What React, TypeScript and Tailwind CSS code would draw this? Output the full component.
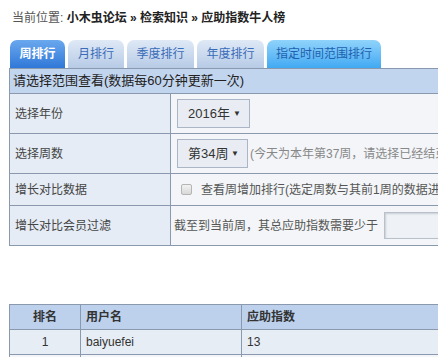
import React from "react";

const font = { fontFamily: '"Liberation Sans", "Noto Sans CJK SC", sans-serif' };

function Tab({ label, active, wide }: { label: string; active?: boolean; wide?: boolean }) {
  if (active) {
    return (
      <div className="h-[28px] w-[55px] rounded-t-[7px] bg-gradient-to-b from-[#6aa8ee] to-[#2f78d8] text-white font-bold text-[12px] flex items-center justify-center">
        {label}
      </div>
    );
  }
  if (wide) {
    return (
      <div className="h-[28px] w-[114px] rounded-t-[7px] bg-gradient-to-b from-[#8fd3fb] to-[#3fa9f2] text-[#1f5fae] text-[12px] flex items-center justify-center">
        {label}
      </div>
    );
  }
  return (
    <div
      className={`h-[28px] rounded-t-[7px] bg-gradient-to-b from-[#dfe9f6] to-[#b7cbe6] text-[#3a6cb8] text-[12px] flex items-center justify-center ${
        label.length > 3 ? "w-[67px]" : "w-[56px]"
      }`}
    >
      {label}
    </div>
  );
}

function Select({ value, w }: { value: string; w: string }) {
  return (
    <div
      className={`${w} h-[29px] border border-[#aab6c6] bg-[#e9edf3] flex items-center justify-between pl-[10px] pr-[8px] text-[13px] text-[#333]`}
    >
      <span>{value}</span>
      <span className="text-[8px] text-[#333]">▼</span>
    </div>
  );
}

export default function App() {
  return (
    <div className="w-[438px] h-[357px] overflow-hidden bg-white text-[12px]" style={font}>
      <div className="w-[800px] pl-[9px]">
        {/* Breadcrumb */}
        <div className="pt-[9px] pl-[3px] h-[40px] text-[12px] text-[#555]">
          当前位置:{" "}
          <span className="font-bold text-[#222]">小木虫论坛 » 检索知识 » 应助指数牛人榜</span>
        </div>

        {/* Tabs */}
        <div className="flex items-end gap-[3px] pl-[1px]">
          <Tab label="周排行" active />
          <Tab label="月排行" />
          <Tab label="季度排行" />
          <Tab label="年度排行" />
          <Tab label="指定时间范围排行" wide />
        </div>

        {/* Filter table */}
        <table className="w-[760px] border-collapse border border-[#8a99ae] text-[12px]">
          <tbody>
            <tr className="h-[25px] bg-[#c2d5ee]">
              <td colSpan={2} className="border border-[#8a99ae] px-[3px] text-[13px] text-[#222]">
                请选择范围查看(数据每60分钟更新一次)
              </td>
            </tr>
            <tr className="h-[40px]">
              <td className="w-[161px] border border-[#8a99ae] bg-[#e5ecf5] pl-[5px] text-[#444]">选择年份</td>
              <td className="border border-[#8a99ae] bg-[#f3f5f8] pl-[6px]">
                <Select value="2016年" w="w-[73px]" />
              </td>
            </tr>
            <tr className="h-[40px]">
              <td className="border border-[#8a99ae] bg-[#e5ecf5] pl-[5px] text-[#444]">选择周数</td>
              <td className="border border-[#8a99ae] bg-[#f3f5f8] pl-[6px]">
                <div className="flex items-center">
                  <Select value="第34周" w="w-[71px]" />
                  <span className="ml-[2px] text-[#888]">(今天为本年第37周，请选择已经结束的周数进行查看)</span>
                </div>
              </td>
            </tr>
            <tr className="h-[32px]">
              <td className="border border-[#8a99ae] bg-[#e5ecf5] pl-[5px] text-[#444]">增长对比数据</td>
              <td className="border border-[#8a99ae] bg-[#f3f5f8] pl-[10px]">
                <div className="flex items-center">
                  <span className="w-[11px] h-[11px] border border-[#b5b5b5] rounded-[2px] bg-gradient-to-b from-[#f2f2f2] to-[#d8d8d8]" />
                  <span className="ml-[9px] text-[#555]">查看周增加排行(选定周数与其前1周的数据进行对比)</span>
                </div>
              </td>
            </tr>
            <tr className="h-[40px]">
              <td className="border border-[#8a99ae] bg-[#e5ecf5] pl-[5px] text-[#444]">增长对比会员过滤</td>
              <td className="border border-[#8a99ae] bg-[#f3f5f8] pl-[3px]">
                <div className="flex items-center">
                  <span className="text-[#555]">截至到当前周，其总应助指数需要少于</span>
                  <span className="ml-[6px] w-[120px] h-[27px] border border-[#b8c0cc] bg-[#eef1f5] shadow-[inset_1px_1px_2px_rgba(0,0,0,0.15)]" />
                </div>
              </td>
            </tr>
          </tbody>
        </table>

        {/* Ranking table */}
        <table className="mt-[58px] w-[760px] border-collapse border border-[#8a99ae] text-[12px]">
          <tbody>
            <tr className="h-[25px] bg-[#bdd1ed] font-bold text-[#333]">
              <td className="w-[71px] border border-[#8a99ae] text-center">排名</td>
              <td className="w-[161px] border border-[#8a99ae] pl-[5px]">用户名</td>
              <td className="border border-[#8a99ae] pl-[5px]">应助指数</td>
            </tr>
            <tr className="h-[25px] bg-[#e7edf5] text-[#333]">
              <td className="border border-[#8a99ae] text-center">1</td>
              <td className="border border-[#8a99ae] pl-[5px]">baiyuefei</td>
              <td className="border border-[#8a99ae] pl-[5px]">13</td>
            </tr>
            <tr className="h-[25px] bg-[#f3f5f8]">
              <td className="border border-[#8a99ae]"></td>
              <td className="border border-[#8a99ae]"></td>
              <td className="border border-[#8a99ae]"></td>
            </tr>
          </tbody>
        </table>
      </div>
    </div>
  );
}
